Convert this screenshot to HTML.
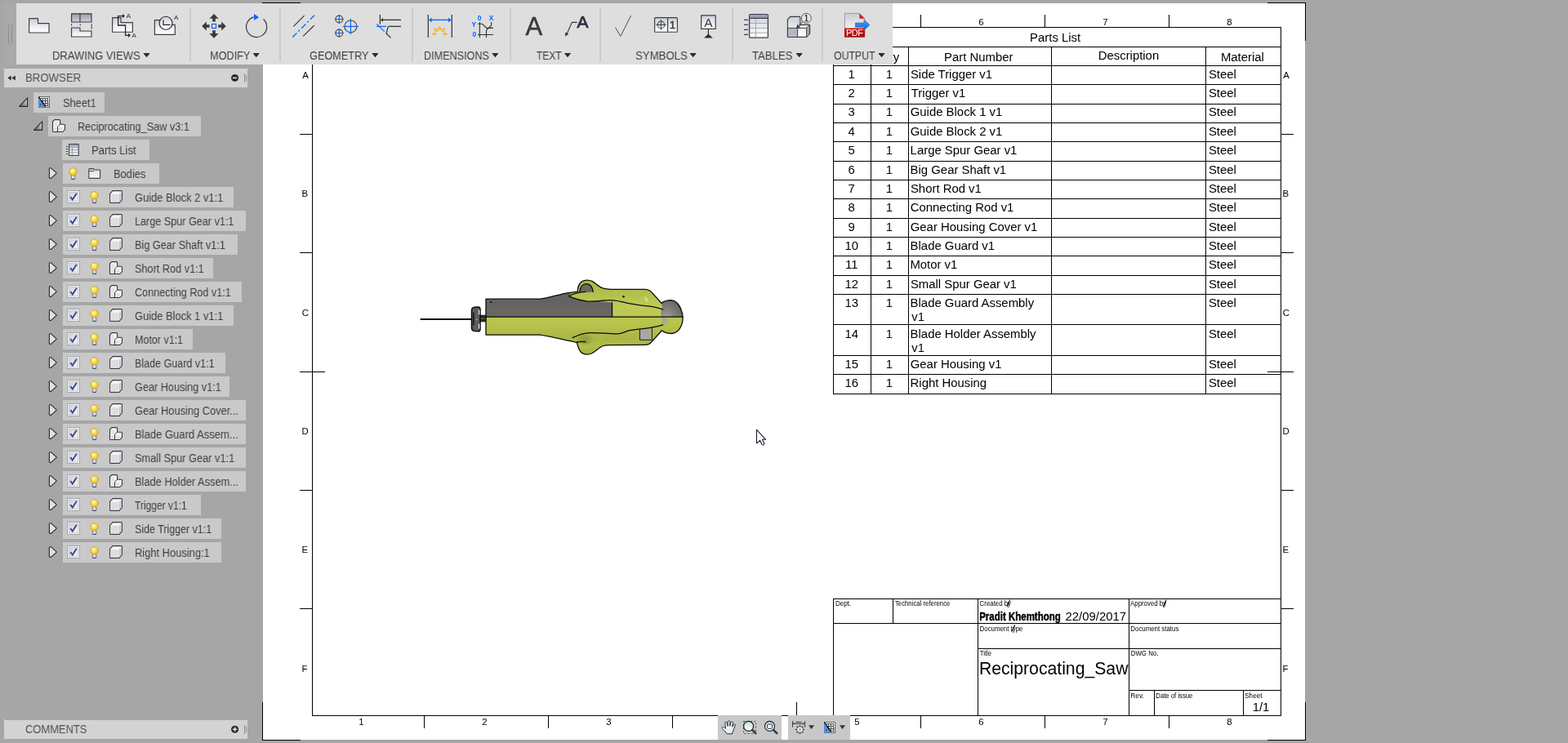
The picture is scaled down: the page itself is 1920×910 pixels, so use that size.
<!DOCTYPE html>
<html lang="en"><head><meta charset="utf-8"><title>Reciprocating_Saw Drawing</title>
<style>
html,body{margin:0;padding:0}
body{width:1920px;height:910px;overflow:hidden;background:#a6a6a6;position:relative;font-family:"Liberation Sans",sans-serif}
#sheet{position:absolute;left:0;top:0}
#toolbar{position:absolute;left:20px;top:4px;width:1073px;height:75px;background:#dedede}
#tbwrap{position:absolute;left:0;top:0;width:1100px;height:80px}
.tl,.pt,.rt{position:absolute;font-size:14px;line-height:17px;white-space:nowrap;transform-origin:0 0;will-change:transform}
.tl{color:#3e3e3e}
.ta{position:absolute;top:65.4px;width:0;height:0;border-left:3.8px solid transparent;border-right:3.8px solid transparent;border-top:5.8px solid #303030}
.ph{position:absolute;background:#d3d3d3}
.pt{color:#505050}
.rb{position:absolute;height:25px;background:#c9c9c9}
.rt{color:#3e3e3e}
.nb{position:absolute;top:876px;height:30px;background:#c8c8c8}
</style></head><body>
<svg id="sheet" width="1920" height="910" viewBox="0 0 1920 910" style="will-change:transform">
<rect x="322" y="4" width="1276" height="902" fill="#fff"/>
<g stroke="#000" stroke-width="1" shape-rendering="crispEdges" fill="none">
<line x1="321" y1="3.5" x2="368" y2="3.5"/>
<line x1="321.5" y1="3" x2="321.5" y2="50"/>
<line x1="1552" y1="3.5" x2="1599" y2="3.5"/>
<line x1="1598.5" y1="3" x2="1598.5" y2="50"/>
<line x1="321" y1="906.5" x2="368" y2="906.5"/>
<line x1="321.5" y1="860" x2="321.5" y2="907"/>
<line x1="1552" y1="906.5" x2="1599" y2="906.5"/>
<line x1="1598.5" y1="860" x2="1598.5" y2="907"/>
<line x1="382" y1="33.5" x2="1569" y2="33.5"/>
<line x1="382" y1="876.5" x2="1569" y2="876.5"/>
<line x1="382.5" y1="33" x2="382.5" y2="877"/>
<line x1="1568.5" y1="33" x2="1568.5" y2="877"/>
<line x1="519.5" y1="18" x2="519.5" y2="34"/>
<line x1="519.5" y1="876" x2="519.5" y2="892"/>
<line x1="671.5" y1="18" x2="671.5" y2="34"/>
<line x1="671.5" y1="876" x2="671.5" y2="892"/>
<line x1="823.5" y1="18" x2="823.5" y2="34"/>
<line x1="823.5" y1="876" x2="823.5" y2="892"/>
<line x1="1127.5" y1="18" x2="1127.5" y2="34"/>
<line x1="1127.5" y1="876" x2="1127.5" y2="892"/>
<line x1="1279.5" y1="18" x2="1279.5" y2="34"/>
<line x1="1279.5" y1="876" x2="1279.5" y2="892"/>
<line x1="1431.5" y1="18" x2="1431.5" y2="34"/>
<line x1="1431.5" y1="876" x2="1431.5" y2="892"/>
<line x1="975.5" y1="18" x2="975.5" y2="50"/>
<line x1="975.5" y1="860" x2="975.5" y2="892"/>
<line x1="367" y1="164.5" x2="383" y2="164.5"/>
<line x1="1568" y1="164.5" x2="1584" y2="164.5"/>
<line x1="367" y1="309.5" x2="383" y2="309.5"/>
<line x1="1568" y1="309.5" x2="1584" y2="309.5"/>
<line x1="367" y1="600.5" x2="383" y2="600.5"/>
<line x1="1568" y1="600.5" x2="1584" y2="600.5"/>
<line x1="367" y1="745.5" x2="383" y2="745.5"/>
<line x1="1568" y1="745.5" x2="1584" y2="745.5"/>
<line x1="367" y1="455.5" x2="398" y2="455.5"/>
<line x1="1552" y1="455.5" x2="1584" y2="455.5"/>
<line x1="1020" y1="57.5" x2="1569" y2="57.5"/>
<line x1="1020" y1="80.5" x2="1569" y2="80.5"/>
<line x1="1020" y1="103.5" x2="1569" y2="103.5"/>
<line x1="1020" y1="127.5" x2="1569" y2="127.5"/>
<line x1="1020" y1="150.5" x2="1569" y2="150.5"/>
<line x1="1020" y1="173.5" x2="1569" y2="173.5"/>
<line x1="1020" y1="197.5" x2="1569" y2="197.5"/>
<line x1="1020" y1="220.5" x2="1569" y2="220.5"/>
<line x1="1020" y1="243.5" x2="1569" y2="243.5"/>
<line x1="1020" y1="267.5" x2="1569" y2="267.5"/>
<line x1="1020" y1="290.5" x2="1569" y2="290.5"/>
<line x1="1020" y1="313.5" x2="1569" y2="313.5"/>
<line x1="1020" y1="337.5" x2="1569" y2="337.5"/>
<line x1="1020" y1="360.5" x2="1569" y2="360.5"/>
<line x1="1020" y1="397.5" x2="1569" y2="397.5"/>
<line x1="1020" y1="435.5" x2="1569" y2="435.5"/>
<line x1="1020" y1="458.5" x2="1569" y2="458.5"/>
<line x1="1020" y1="482.5" x2="1569" y2="482.5"/>
<line x1="1020.5" y1="57" x2="1020.5" y2="483"/>
<line x1="1066.5" y1="57" x2="1066.5" y2="483"/>
<line x1="1112.5" y1="57" x2="1112.5" y2="483"/>
<line x1="1287.5" y1="57" x2="1287.5" y2="483"/>
<line x1="1476.5" y1="57" x2="1476.5" y2="483"/>
<line x1="1020.5" y1="33" x2="1020.5" y2="58"/>
<line x1="1020" y1="733.5" x2="1569" y2="733.5"/>
<line x1="1020.5" y1="733" x2="1020.5" y2="877"/>
<line x1="1093.5" y1="733" x2="1093.5" y2="764"/>
<line x1="1197.5" y1="733" x2="1197.5" y2="877"/>
<line x1="1382.5" y1="733" x2="1382.5" y2="877"/>
<line x1="1020" y1="763.5" x2="1569" y2="763.5"/>
<line x1="1197" y1="794.5" x2="1569" y2="794.5"/>
<line x1="1382" y1="845.5" x2="1569" y2="845.5"/>
<line x1="1413.5" y1="845" x2="1413.5" y2="877"/>
<line x1="1522.5" y1="845" x2="1522.5" y2="877"/>
</g>
<g font-family="'Liberation Sans', sans-serif" font-size="11.4" fill="#000" text-anchor="middle">
<text x="442.3" y="31">1</text><text x="442.3" y="888.2">1</text>
<text x="593.3" y="31">2</text><text x="593.3" y="888.2">2</text>
<text x="745.3" y="31">3</text><text x="745.3" y="888.2">3</text>
<text x="897.3" y="31">4</text><text x="897.3" y="888.2">4</text>
<text x="1049.3" y="31">5</text><text x="1049.3" y="888.2">5</text>
<text x="1201.3" y="31">6</text><text x="1201.3" y="888.2">6</text>
<text x="1353.3" y="31">7</text><text x="1353.3" y="888.2">7</text>
<text x="1505.3" y="31">8</text><text x="1505.3" y="888.2">8</text>
<text x="370.24" y="96" text-anchor="start">A</text><text x="1571.24" y="96" text-anchor="start">A</text>
<text x="369.39" y="241.2" text-anchor="start">B</text><text x="1570.39" y="241.2" text-anchor="start">B</text>
<text x="369.73" y="387" text-anchor="start">C</text><text x="1570.73" y="387" text-anchor="start">C</text>
<text x="369.39" y="532" text-anchor="start">D</text><text x="1570.39" y="532" text-anchor="start">D</text>
<text x="369.39" y="677" text-anchor="start">E</text><text x="1570.39" y="677" text-anchor="start">E</text>
<text x="369.39" y="823" text-anchor="start">F</text><text x="1570.39" y="823" text-anchor="start">F</text>
</g>
<g font-family="'Liberation Sans', sans-serif" font-size="14.9" fill="#000">
<text id="n1" x="1042.7" y="95.7" text-anchor="middle">1</text>
<text id="q1" x="1088.9" y="95.7" text-anchor="middle">1</text>
<text id="p1" x="1114.93" y="95.7">Side Trigger v1</text>
<text id="m1" x="1479.93" y="95.7">Steel</text>
<text id="n2" x="1042.7" y="119.0" text-anchor="middle">2</text>
<text id="q2" x="1088.9" y="119.0" text-anchor="middle">1</text>
<text id="p2" x="1115.83" y="119.0">Trigger v1</text>
<text id="m2" x="1479.93" y="119.0">Steel</text>
<text id="n3" x="1042.7" y="142.4" text-anchor="middle">3</text>
<text id="q3" x="1088.9" y="142.4" text-anchor="middle">1</text>
<text id="p3" x="1114.76" y="142.4">Guide Block 1 v1</text>
<text id="m3" x="1479.93" y="142.4">Steel</text>
<text id="n4" x="1042.7" y="165.8" text-anchor="middle">4</text>
<text id="q4" x="1088.9" y="165.8" text-anchor="middle">1</text>
<text id="p4" x="1114.76" y="165.8">Guide Block 2 v1</text>
<text id="m4" x="1479.93" y="165.8">Steel</text>
<text id="n5" x="1042.7" y="189.1" text-anchor="middle">5</text>
<text id="q5" x="1088.9" y="189.1" text-anchor="middle">1</text>
<text id="p5" x="1114.61" y="189.1">Large Spur Gear v1</text>
<text id="m5" x="1479.93" y="189.1">Steel</text>
<text id="n6" x="1042.7" y="212.5" text-anchor="middle">6</text>
<text id="q6" x="1088.9" y="212.5" text-anchor="middle">1</text>
<text id="p6" x="1114.61" y="212.5">Big Gear Shaft v1</text>
<text id="m6" x="1479.93" y="212.5">Steel</text>
<text id="n7" x="1042.7" y="235.8" text-anchor="middle">7</text>
<text id="q7" x="1088.9" y="235.8" text-anchor="middle">1</text>
<text id="p7" x="1114.93" y="235.8">Short Rod v1</text>
<text id="m7" x="1479.93" y="235.8">Steel</text>
<text id="n8" x="1042.7" y="259.2" text-anchor="middle">8</text>
<text id="q8" x="1088.9" y="259.2" text-anchor="middle">1</text>
<text id="p8" x="1114.76" y="259.2">Connecting Rod v1</text>
<text id="m8" x="1479.93" y="259.2">Steel</text>
<text id="n9" x="1042.7" y="282.5" text-anchor="middle">9</text>
<text id="q9" x="1088.9" y="282.5" text-anchor="middle">1</text>
<text id="p9" x="1114.76" y="282.5">Gear Housing Cover v1</text>
<text id="m9" x="1479.93" y="282.5">Steel</text>
<text id="n10" x="1042.7" y="305.9" text-anchor="middle">10</text>
<text id="q10" x="1088.9" y="305.9" text-anchor="middle">1</text>
<text id="p10" x="1114.61" y="305.9">Blade Guard v1</text>
<text id="m10" x="1479.93" y="305.9">Steel</text>
<text id="n11" x="1042.7" y="329.2" text-anchor="middle">11</text>
<text id="q11" x="1088.9" y="329.2" text-anchor="middle">1</text>
<text id="p11" x="1114.41" y="329.2">Motor v1</text>
<text id="m11" x="1479.93" y="329.2">Steel</text>
<text id="n12" x="1042.7" y="352.6" text-anchor="middle">12</text>
<text id="q12" x="1088.9" y="352.6" text-anchor="middle">1</text>
<text id="p12" x="1114.93" y="352.6">Small Spur Gear v1</text>
<text id="m12" x="1479.93" y="352.6">Steel</text>
<text id="n13" x="1042.7" y="375.9" text-anchor="middle">13</text>
<text id="q13" x="1088.9" y="375.9" text-anchor="middle">1</text>
<text id="p13" x="1114.61" y="375.9">Blade Guard Assembly</text>
<text id="v13" x="1116.33" y="393.2">v1</text>
<text id="m13" x="1479.93" y="375.9">Steel</text>
<text id="n14" x="1042.7" y="413.6" text-anchor="middle">14</text>
<text id="q14" x="1088.9" y="413.6" text-anchor="middle">1</text>
<text id="p14" x="1114.61" y="413.6">Blade Holder Assembly</text>
<text id="v14" x="1116.33" y="430.5">v1</text>
<text id="m14" x="1479.93" y="413.6">Steel</text>
<text id="n15" x="1042.7" y="450.6" text-anchor="middle">15</text>
<text id="q15" x="1088.9" y="450.6" text-anchor="middle">1</text>
<text id="p15" x="1114.76" y="450.6">Gear Housing v1</text>
<text id="m15" x="1479.93" y="450.6">Steel</text>
<text id="n16" x="1042.7" y="474.4" text-anchor="middle">16</text>
<text id="q16" x="1088.9" y="474.4" text-anchor="middle">1</text>
<text id="p16" x="1114.61" y="474.4">Right Housing</text>
<text id="m16" x="1479.93" y="474.4">Steel</text>
<text id="hPL" x="1261.11" y="51.2">Parts List</text>
<text id="hItem" x="1029.26" y="74.7">Item</text>
<text id="hQty" x="1077.93" y="74.7">Qty</text>
<text id="hPN" x="1156.11" y="74.7">Part Number</text>
<text id="hDesc" x="1344.71" y="73.0">Description</text>
<text id="hMat" x="1494.91" y="74.7">Material</text>
<text id="date" x="1304.56" y="759.8">22/09/2017</text>
<text id="sh" x="1533.68" y="871.4">1/1</text>
<text id="title" x="1198.90" y="825.6" font-size="21.2">Reciprocating_Saw</text>
<text id="name" x="1199.14" y="760.4" font-size="15.2" font-weight="bold" stroke="#000" stroke-width="0.45" textLength="99.67" lengthAdjust="spacingAndGlyphs">Pradit Khemthong</text>
<text id="l1" x="1022.97" y="742.2" font-size="8.2" textLength="19.10" lengthAdjust="spacingAndGlyphs">Dept.</text>
<text id="l2" x="1095.95" y="742.2" font-size="8.2" textLength="67.42" lengthAdjust="spacingAndGlyphs">Technical reference</text>
<text id="l3" x="1199.60" y="742.2" font-size="8.2" textLength="38.45" lengthAdjust="spacingAndGlyphs">Created by</text>
<text id="l4" x="1384.03" y="742.2" font-size="8.2" textLength="44.14" lengthAdjust="spacingAndGlyphs">Approved by</text>
<text id="l5" x="1199.60" y="773.3" font-size="8.2" textLength="52.89" lengthAdjust="spacingAndGlyphs">Document type</text>
<text id="l6" x="1384.34" y="773.3" font-size="8.2" textLength="59.01" lengthAdjust="spacingAndGlyphs">Document status</text>
<text id="l7" x="1199.78" y="802.8" font-size="8.2" textLength="14.41" lengthAdjust="spacingAndGlyphs">Title</text>
<text id="l8" x="1384.78" y="802.8" font-size="8.2" textLength="33.60" lengthAdjust="spacingAndGlyphs">DWG No.</text>
<text id="l9" x="1384.21" y="854.7" font-size="8.2" textLength="16.60" lengthAdjust="spacingAndGlyphs">Rev.</text>
<text id="l10" x="1415.37" y="854.7" font-size="8.2" textLength="45.05" lengthAdjust="spacingAndGlyphs">Date of issue</text>
<text id="l11" x="1524.23" y="854.7" font-size="8.2" textLength="21.19" lengthAdjust="spacingAndGlyphs">Sheet</text>
</g>
<path d="M1233 743.2L1236.8 734.8 M1424.2 743.2L1428 734.8 M1238.8 773.8L1242.8 765.2" stroke="#000" stroke-width="1.1" fill="none"/>
</svg>
<svg id="saw" width="340" height="110" viewBox="505 335 340 110" style="position:absolute;left:505px;top:335px">
<defs>
<linearGradient id="sY" gradientUnits="userSpaceOnUse" x1="0" y1="343" x2="0" y2="434"><stop offset="0" stop-color="#aab646"/><stop offset="0.2" stop-color="#b4c04c"/><stop offset="0.36" stop-color="#c0cb58"/><stop offset="0.5" stop-color="#bac650"/><stop offset="0.62" stop-color="#b6c24c"/><stop offset="0.78" stop-color="#aab644"/><stop offset="0.9" stop-color="#b2be4a"/><stop offset="1" stop-color="#a4b040"/></linearGradient>
<linearGradient id="sG" x1="0" y1="0" x2="0" y2="1"><stop offset="0" stop-color="#62605d"/><stop offset="1" stop-color="#6a6865"/></linearGradient>
<radialGradient id="sK" gradientUnits="userSpaceOnUse" cx="816" cy="388" r="20"><stop offset="0" stop-color="#a09e9a"/><stop offset="0.45" stop-color="#84827e"/><stop offset="1" stop-color="#6c6a67"/></radialGradient>
<radialGradient id="sK2" gradientUnits="userSpaceOnUse" cx="812" cy="392" r="9"><stop offset="0" stop-color="#a4a29c"/><stop offset="1" stop-color="#a4a29c" stop-opacity="0"/></radialGradient>
<radialGradient id="sSh" gradientUnits="userSpaceOnUse" cx="716" cy="416" r="12"><stop offset="0" stop-color="#8e9a3a"/><stop offset="1" stop-color="#8e9a3a" stop-opacity="0"/></radialGradient>
<radialGradient id="sHi"><stop offset="0" stop-color="#dfe6a4" stop-opacity="0.9"/><stop offset="1" stop-color="#dfe6a4" stop-opacity="0"/></radialGradient>
</defs>
<!-- blade -->
<path d="M515.4 391H578" stroke="#0c0c0c" stroke-width="1.9" stroke-linecap="round" fill="none"/>
<!-- shaft -->
<rect x="587.4" y="386.2" width="8.2" height="7.6" fill="#2e2c28" stroke="#0c0c0c" stroke-width="0.9"/>
<path d="M588 390H595" stroke="#5a5852" stroke-width="1.2"/>
<!-- guard -->
<path d="M577.5 380.4Q577.5 376.6 581.2 376.3L585.4 376.1Q588 376.3 588 378.8V403.2Q588 405.8 585.4 405.8L581.4 405.5Q577.5 405 577.5 401.4Z" fill="#5c5c5a" stroke="#0c0c0c" stroke-width="1.5"/>
<path d="M586.6 379.4v5.8 M586.6 396.6v6" stroke="#ecece6" stroke-width="1.3" fill="none"/>
<path d="M579.9 382.6V398.6" stroke="#1c1c1c" stroke-width="1.8" fill="none"/>
<rect x="583" y="390.8" width="1.2" height="1.2" fill="#d8d8d0"/>
<!-- body fill -->
<path d="M595 366.2H661C672 365 684 360.6 696 358.6L707.2 357.2C707.4 352 709.4 346.4 713.4 344.4C717 342.8 722 342.9 725.4 344.6C729.6 346.8 733 351.4 739 353.2C742 354.2 745 354.3 748 354.3H789.6C793.2 354.3 795.6 355.4 797.6 357.6L810 371.2C813 368.8 817.4 367.7 821.6 367.7C827.6 368 831.4 373.4 833.6 378.6C836.6 385.4 836.6 393 834.4 398.6C832.2 404 828.4 408.4 822.6 408.5C817.6 408.6 813.4 407.2 810.4 404.8L797.4 419.4C795.4 421.4 793.2 422.4 790 422.4L748 422.7C744 422.7 740.4 423 737.4 424C732.4 426.4 728.6 431 724.2 433C720.4 434.4 716 434.3 712.6 432.4C709 430 707.4 424 706.4 419.4C692 416.6 676 412.4 661 410.2H595Z" fill="url(#sY)"/>
<ellipse cx="716" cy="416" rx="12" ry="6" fill="url(#sSh)"/>
<!-- gray top -->
<path d="M595 366.2H661C672 365 684 360.6 696 358.6L699.6 358.2L696.6 362.4C702 365 710 367.6 718 368.9C728 369.6 740 369.2 749.5 370.4V388.2H595Z" fill="url(#sG)"/>
<!-- arch -->
<path d="M709.8 357.4C710.4 351.4 713.6 347.6 718 347.6C722.6 347.6 726 352 726.2 357.6C721 358.4 715 358 709.8 357.4Z" fill="#6a6865"/>
<!-- knob gray -->
<path d="M809.6 378.2V388.2H836C836.2 383 834.6 377.8 832 373.6C829.4 369.8 825.6 367.7 821.6 367.7C817.4 367.7 813 368.8 810 371.2L811.4 377.8Z" fill="url(#sK)"/>
<path d="M809.6 388.2H822C821 394 817 399 811.8 398Z" fill="url(#sK2)"/>
<ellipse cx="791.4" cy="366.6" rx="2.6" ry="5" fill="url(#sHi)" transform="rotate(-18 791.4 366.6)"/>
<!-- small rect -->
<path d="M783.4 403.6L798.4 402V416.3H783.4Z" fill="#a9a7a0"/>
<!-- outlines -->
<g fill="none" stroke="#0c0c0c" stroke-width="1.3" stroke-linejoin="round" stroke-linecap="round">
<path d="M595 366.2H661C672 365 684 360.6 696 358.6L707.2 357.2C707.4 352 709.4 346.4 713.4 344.4C717 342.8 722 342.9 725.4 344.6C729.6 346.8 733 351.4 739 353.2C742 354.2 745 354.3 748 354.3H789.6C793.2 354.3 795.6 355.4 797.6 357.6L810 371.2C813 368.8 817.4 367.7 821.6 367.7C827.6 368 831.4 373.4 833.6 378.6C836.6 385.4 836.6 393 834.4 398.6C832.2 404 828.4 408.4 822.6 408.5C817.6 408.6 813.4 407.2 810.4 404.8L797.4 419.4C795.4 421.4 793.2 422.4 790 422.4L748 422.7C744 422.7 740.4 423 737.4 424C732.4 426.4 728.6 431 724.2 433C720.4 434.4 716 434.3 712.6 432.4C709 430 707.4 424 706.4 419.4C692 416.6 676 412.4 661 410.2H595Z"/>
<path d="M595 388.2H836"/>
<path d="M749.5 370.4V388.2"/>
<path d="M717 357.3C710 357.4 702 359.6 696.4 362.6C702 365.2 710 367.6 718 368.9C728 369.8 738 368 746 367.6C754 367.4 762 369.6 769 371.4C779 373.6 790 374.4 799 375.6C804 376.4 808 377.8 811.6 378.6"/>
<path d="M709.8 357.4C710.4 351.4 713.6 347.6 718 347.6C722.6 347.6 726 352 726.2 357.6"/>
<path d="M701.2 413.6C707 410.6 715 408 723 407.6C734 407.2 746 409.2 757 408.8C762 408.4 766 406 770 404.8C780 403 790 402.6 799 400.9C804 400 808 399 811.8 397.9"/>
<path d="M706.6 418.8C710 418.2 713.6 418.2 717 418.6"/>
<path d="M783.4 403.4V416.3H798.4V401.4" stroke-width="0.9"/>
</g>
<circle cx="763.5" cy="363.2" r="1.25" fill="#0c0c0c"/>
<rect x="600" y="369.4" width="2.2" height="1.6" fill="#0c0c0c"/>
</svg>

<div style="position:absolute;left:4px;top:4px;width:16px;height:75px;background:#a9a9a9"></div>
<div id="toolbar"></div>
<div id="tbwrap">
<svg id="tbicons" width="1100" height="80" viewBox="0 0 1100 80" style="position:absolute;left:0;top:0;will-change:transform">
<defs>
<linearGradient id="gA" x1="0" y1="0" x2="0" y2="1"><stop offset="0" stop-color="#c9cdd6"/><stop offset="0.6" stop-color="#eef0f3"/><stop offset="1" stop-color="#ffffff"/></linearGradient>
<linearGradient id="gB" x1="0" y1="0" x2="0" y2="1"><stop offset="0" stop-color="#969dac"/><stop offset="1" stop-color="#cdd1d8"/></linearGradient>
<linearGradient id="gR" x1="0" y1="0" x2="0" y2="1"><stop offset="0" stop-color="#d0181c"/><stop offset="1" stop-color="#a50c10"/></linearGradient>
<linearGradient id="gBl" x1="0" y1="0" x2="0" y2="1"><stop offset="0" stop-color="#4aa0f0"/><stop offset="1" stop-color="#1468d8"/></linearGradient>
<radialGradient id="gO"><stop offset="0" stop-color="#ffe020"/><stop offset="0.6" stop-color="#ffa010"/><stop offset="1" stop-color="#ff7a00" stop-opacity="0"/></radialGradient>
<filter id="sh" x="-20%" y="-20%" width="140%" height="150%"><feDropShadow dx="0" dy="1" stdDeviation="0.7" flood-color="#000" flood-opacity="0.35"/></filter>
</defs>
<rect x="10" y="30" width="1" height="23" fill="#8e8e8e"/><rect x="14" y="30" width="1" height="23" fill="#8e8e8e"/>
<rect x="232" y="9" width="2" height="66" fill="#cbcbcb"/>
<rect x="342" y="9" width="2" height="66" fill="#cbcbcb"/>
<rect x="504" y="9" width="2" height="66" fill="#cbcbcb"/>
<rect x="624" y="9" width="2" height="66" fill="#cbcbcb"/>
<rect x="734" y="9" width="2" height="66" fill="#cbcbcb"/>
<rect x="896" y="9" width="2" height="66" fill="#cbcbcb"/>
<rect x="1006" y="9" width="2" height="66" fill="#cbcbcb"/>
<g filter="url(#sh)"><path d="M35.6 22.6H46.5V28.6H60V40H35.6Z" fill="url(#gA)" stroke="#3c3c3c" stroke-width="1.15" stroke-linejoin="round"/></g>
<g filter="url(#sh)"><path d="M87.6 16.8H98V27H87.6Z M98 16.8H112V27H98Z" fill="url(#gB)" stroke="#3c3c3c" stroke-width="1.15" stroke-linejoin="round"/><path d="M87.6 34H98V38H112V45H87.6Z" fill="url(#gA)" stroke="#3c3c3c" stroke-width="1.15" stroke-linejoin="round"/></g>
<path d="M87.6 29.2v2.4 M98.2 29.2v2.4 M112.2 29.2v6.4" stroke="#3a3a3a" stroke-width="1" fill="none"/>
<g filter="url(#sh)"><path d="M137.6 21.6H148V27.6H162.4V39.2H137.6Z" fill="url(#gA)" stroke="#3c3c3c" stroke-width="1.15" stroke-linejoin="round"/></g>
<path d="M151 19.6H144.6V31H153.6V43.3H158" stroke="#2a2a2a" stroke-width="1.3" fill="none"/>
<path d="M150 17L153 19.6L150 22.2Z M157 40.7L160 43.3L157 45.9Z" fill="#2a2a2a"/>
<text x="154.8" y="21.6" font-family="'Liberation Sans',sans-serif" font-size="8" fill="#2a2a2a">A</text>
<text x="161.6" y="45.8" font-family="'Liberation Sans',sans-serif" font-size="8" fill="#2a2a2a">A</text>
<g filter="url(#sh)"><path d="M189.4 24.6H197L210.8 30.4H214.3V42.4H189.4Z" fill="url(#gA)" stroke="#3c3c3c" stroke-width="1.15" stroke-linejoin="round"/></g>
<circle cx="203.1" cy="28.2" r="8" fill="url(#gA)" stroke="#2a2a2a" stroke-width="1.1"/>
<path d="M200 24.6V30.4H208.6" stroke="#2a2a2a" stroke-width="1.2" fill="none"/>
<text x="213" y="24.4" font-family="'Liberation Sans',sans-serif" font-size="8" fill="#2a2a2a">A</text>
<g fill="#3a3a3a" filter="url(#sh)"><path d="M262 17L267.6 22.8H263.8V26.6H260.2V22.8H256.4Z"/><path d="M262 46.8L267.6 41H263.8V37.2H260.2V41H256.4Z"/><path d="M247.2 32L252.8 26.4V30.2H256.6V33.8H252.8V37.6Z"/><path d="M276.8 32L271.2 26.4V30.2H267.2V33.8H271.2V37.6Z"/></g>
<rect x="259.5" y="29.5" width="5" height="5" fill="#e4e0d8" stroke="#0a64ff" stroke-width="1.2"/>
<path d="M322.5 23.5A12.6 12.6 0 1 1 310.6 20.8" fill="none" stroke="#3a3a3a" stroke-width="1.2" filter="url(#sh)"/>
<path d="M311 17L317.2 21.2L311 24.8Z" fill="#0a64ff"/>
<g fill="none" stroke-linecap="butt" filter="url(#sh)"><path d="M359.4 32.4L372.6 19.2 M371.2 44.4L384.6 31.2" stroke="#3a3a3a" stroke-width="1.2"/><path d="M358.2 45.6L385 18.8" stroke="#0a64ff" stroke-width="1.35" stroke-dasharray="7.4 2.6 2.4 3"/></g>
<g fill="none" filter="url(#sh)"><circle cx="415.3" cy="23.5" r="4.4" stroke="#4a4a4a" stroke-width="1.2"/><circle cx="415.3" cy="40.5" r="4.4" stroke="#4a4a4a" stroke-width="1.2"/><circle cx="429.4" cy="32.4" r="7.4" stroke="#4a4a4a" stroke-width="1.2"/><path d="M410 23.5H421 M415.3 18V29 M410 40.5H421 M415.3 35V46 M420 32.4H439 M429.4 23V42" stroke="#0a64ff" stroke-width="1.2"/></g>
<g fill="none" filter="url(#sh)"><path d="M465.4 18V29.8 M467 24.4H491 M475.4 32.4H491 M475.2 32.6L473 41L478.6 46.4" stroke="#2f2f2f" stroke-width="1.2"/><path d="M466 24.4L469 22V26.8Z" fill="#2f2f2f" stroke="none"/><path d="M461 32.4H473 M461.4 29.4L470.8 38.6" stroke="#0a64ff" stroke-width="1.2"/></g>
<g fill="none" filter="url(#sh)"><path d="M524.3 18V46 M553.3 18V46" stroke="#2f2f2f" stroke-width="1.2"/><path d="M527 24.4H551" stroke="#0a64ff" stroke-width="1.4"/><path d="M525 24.4L528.6 21.6V27.2Z M552.6 24.4L549 21.6V27.2Z" fill="#0a64ff"/></g>
<path d="M534.2 37.3l-2.4 -2.4" stroke="#ff8a00" stroke-width="1.1" fill="none"/><circle cx="534.2" cy="37.3" r="2.3" fill="url(#gO)"/><circle cx="534.2" cy="37.3" r="1" fill="#ffe626"/>
<path d="M538.2 35.5l0.0 -3.1" stroke="#ff8a00" stroke-width="1.1" fill="none"/><circle cx="538.2" cy="35.5" r="2.3" fill="url(#gO)"/><circle cx="538.2" cy="35.5" r="1" fill="#ffe626"/>
<path d="M542.5 37.1l2.4 -2.4" stroke="#ff8a00" stroke-width="1.1" fill="none"/><circle cx="542.5" cy="37.1" r="2.3" fill="url(#gO)"/><circle cx="542.5" cy="37.1" r="1" fill="#ffe626"/>
<path d="M532.4 41.5l-3.1 0.0" stroke="#ff8a00" stroke-width="1.1" fill="none"/><circle cx="532.4" cy="41.5" r="2.3" fill="url(#gO)"/><circle cx="532.4" cy="41.5" r="1" fill="#ffe626"/>
<path d="M544.4 41.5l3.1 0.0" stroke="#ff8a00" stroke-width="1.1" fill="none"/><circle cx="544.4" cy="41.5" r="2.3" fill="url(#gO)"/><circle cx="544.4" cy="41.5" r="1" fill="#ffe626"/>
<g font-family="'Liberation Sans',sans-serif" font-size="8.5" font-weight="bold" fill="#0a64ff" text-anchor="middle"><text x="587" y="25">0</text><text x="601.6" y="25">X</text><text x="580.4" y="32.8">Y</text><text x="580.8" y="44.8">0</text></g>
<path d="M587.4 27V46 M585 29.3H590.4L596 34.4H604 M601.6 27V31L595.5 37.2V46 M585 42.5H604" fill="none" stroke="#2f2f2f" stroke-width="1.1"/>
<text x="653.8" y="42.8" font-family="'Liberation Sans',sans-serif" font-size="31" stroke="#3a3a3a" stroke-width="0.5" fill="#3a3a3a" text-anchor="middle" filter="url(#sh)">A</text>
<text x="713.6" y="33.8" font-family="'Liberation Sans',sans-serif" font-size="21" stroke="#2b3040" stroke-width="0.7" fill="#2b3040" text-anchor="middle" filter="url(#sh)">A</text>
<path d="M706.6 27.4H700.4L693.6 42.6" fill="none" stroke="#2b3040" stroke-width="1.1"/><path d="M692 44.8L692.4 39.6L696.2 41.6Z" fill="#2b3040"/>
<path d="M753.6 33.8L759.8 44.4L772.6 19.2" fill="none" stroke="#4a4a4a" stroke-width="1" filter="url(#sh)"/>
<g filter="url(#sh)"><rect x="801.6" y="21.6" width="27.8" height="17.6" rx="1" fill="url(#gA)" stroke="#3c3c3c" stroke-width="1.15" stroke-linejoin="round"/></g><path d="M817.6 21.6V39.2" stroke="#3c3c3c" stroke-width="1.15" stroke-linejoin="round"/>
<circle cx="809.4" cy="30.4" r="4.3" fill="none" stroke="#4a4a4a" stroke-width="1.1"/><path d="M803.4 30.4H815.6 M809.4 24.2V36.6" stroke="#4a4a4a" stroke-width="1.1"/>
<text x="823.6" y="34.8" font-family="'Liberation Sans',sans-serif" font-size="13.5" stroke="#3a3a3a" stroke-width="0.5" fill="#3a3a3a" text-anchor="middle">1</text>
<g filter="url(#sh)"><rect x="858.6" y="18.8" width="17.6" height="16.6" fill="url(#gA)" stroke="#3c3c3c" stroke-width="1.15" stroke-linejoin="round"/></g>
<text x="867.4" y="32.6" font-family="'Liberation Sans',sans-serif" font-size="15.5" fill="#3a3a3a" text-anchor="middle">A</text>
<path d="M867.4 35.6V42" stroke="#2f2f2f" stroke-width="1.2"/><path d="M862 46.6L867.4 41.4L872.8 46.6Z" fill="#2f2f2f"/>
<g filter="url(#sh)"><rect x="917.6" y="17.6" width="22.8" height="28.6" rx="1.2" fill="url(#gA)" stroke="#3a3f50" stroke-width="1.3"/></g>
<rect x="918.2" y="18.2" width="21.6" height="3.8" fill="#9aa0b2"/><path d="M917.6 22.4H940.4" stroke="#3a3f50" stroke-width="1.2"/>
<path d="M918 28.4H940 M918 34.3H940 M918 40.2H940 M925.4 23V46" stroke="#a6a6ae" stroke-width="1"/>
<path d="M911 24.4H916 M911 30.4H916 M911 36.4H916 M911 42.4H916" stroke="#3a3f50" stroke-width="1.2"/>
<g filter="url(#sh)"><path d="M964.4 23.8L967.6 20.4H978.8Q979.8 20.4 979.8 21.6V30.4H990.6Q991.6 30.4 991.6 31.4V41.2L987.6 45.3H964.4Z" fill="url(#gA)" stroke="#3c3c3c" stroke-width="1.15" stroke-linejoin="round"/></g>
<rect x="965" y="35" width="11" height="9.7" fill="#b2b8c6"/><path d="M988.2 34.6L991 31.8V41L988.2 44.2Z" fill="#9aa4b2"/><path d="M976.6 24.6L979.2 22V30L976.6 33.6Z" fill="#c6cad4"/>
<path d="M964.4 34.4H976.6V45.3 M976.6 34.4H987.6V45 M987.6 34.4L991.4 30.6 M976.6 34.4L980 30.6" fill="none" stroke="#3c3c3c" stroke-width="1"/>
<circle cx="987.3" cy="22.3" r="6" fill="#e6e6e6" stroke="#5a5a5a" stroke-width="1"/>
<text x="987.3" y="26.3" font-family="'Liberation Serif',serif" font-size="11.5" fill="#2a2a2a" stroke="#2a2a2a" stroke-width="0.3" text-anchor="middle">1</text>
<path d="M982.8 26.6L978 31.6" stroke="#3a3a3a" stroke-width="1"/><path d="M975.2 34.2L976.2 29.8L979.8 33.4Z" fill="#3a3a3a"/>
<g filter="url(#sh)"><path d="M1034.4 16.4H1052.4L1058.8 22.8V45.4H1034.4Z" fill="url(#gA)" stroke="#8a8a8a" stroke-width="0.8"/></g>
<path d="M1052.4 16.4L1058.8 22.8H1052.4Z" fill="#d0202a"/>
<rect x="1034" y="34.4" width="25" height="11.2" fill="url(#gR)"/>
<text x="1046.5" y="44" font-family="'Liberation Sans',sans-serif" font-size="11" fill="#fff" text-anchor="middle" textLength="21">PDF</text>
<path d="M1047.4 28H1058V24.2L1065 30.6L1058 37V33.2H1047.4Z" fill="url(#gBl)" stroke="#1a5fc0" stroke-width="0.6"/>
<g fill="#2c2c2c"><path d="M175.8 65H183.20000000000002V65.7L179.5 70.3L175.8 65.7Z"/><path d="M310 65H317.4V65.7L313.7 70.3L310 65.7Z"/><path d="M455.7 65H463.09999999999997V65.7L459.4 70.3L455.7 65.7Z"/><path d="M602.7 65H610.1V65.7L606.4000000000001 70.3L602.7 65.7Z"/><path d="M691.3 65H698.6999999999999V65.7L695.0 70.3L691.3 65.7Z"/><path d="M845 65H852.4V65.7L848.7 70.3L845 65.7Z"/><path d="M975 65H982.4V65.7L978.7 70.3L975 65.7Z"/><path d="M1075.8 65H1083.2V65.7L1079.5 70.3L1075.8 65.7Z"/></g>
</svg>
<div class="tl" id="tl0" style="left:64.00px;top:60px;transform:scaleX(0.9276)">DRAWING VIEWS</div>
<div class="tl" id="tl1" style="left:257.00px;top:60px;transform:scaleX(0.9070)">MODIFY</div>
<div class="tl" id="tl2" style="left:379.00px;top:60px;transform:scaleX(0.9074)">GEOMETRY</div>
<div class="tl" id="tl3" style="left:519.00px;top:60px;transform:scaleX(0.9017)">DIMENSIONS</div>
<div class="tl" id="tl4" style="left:657.00px;top:60px;transform:scaleX(0.8546)">TEXT</div>
<div class="tl" id="tl5" style="left:778.00px;top:60px;transform:scaleX(0.9437)">SYMBOLS</div>
<div class="tl" id="tl6" style="left:921.00px;top:60px;transform:scaleX(0.9393)">TABLES</div>
<div class="tl" id="tl7" style="left:1021.00px;top:60px;transform:scaleX(0.8781)">OUTPUT</div>
</div>
<div id="browser">
<div class="ph" style="left:5px;top:84px;width:298px;height:23px"></div><div class="pt" id="hb" style="left:31.00px;top:87px;transform:scaleX(0.9419)">BROWSER</div>
<div class="ph" style="left:5px;top:882px;width:298px;height:23px"></div><div class="pt" id="hc" style="left:31.00px;top:885px;transform:scaleX(0.9233)">COMMENTS</div>
<div class="rb" style="left:41px;top:113px;width:87px"></div><div class="rt" id="r0" style="left:77.00px;top:118px;transform:scaleX(0.9172)">Sheet1</div>
<div class="rb" style="left:59px;top:142px;width:187px"></div><div class="rt" id="r1" style="left:95.00px;top:147px;transform:scaleX(0.9069)">Reciprocating_Saw v3:1</div>
<div class="rb" style="left:76px;top:171px;width:107px"></div><div class="rt" id="r2" style="left:112.00px;top:176px;transform:scaleX(0.9348)">Parts List</div>
<div class="rb" style="left:77px;top:200px;width:118px"></div><div class="rt" id="r3" style="left:139.00px;top:205px;transform:scaleX(0.9208)">Bodies</div>
<div class="rb" style="left:77px;top:229px;width:209px"></div><div class="rt" id="r4" style="left:165.00px;top:234px;transform:scaleX(0.9218)">Guide Block 2 v1:1</div>
<div class="rb" style="left:77px;top:258px;width:224px"></div><div class="rt" id="r5" style="left:165.00px;top:263px;transform:scaleX(0.9018)">Large Spur Gear v1:1</div>
<div class="rb" style="left:77px;top:287px;width:214px"></div><div class="rt" id="r6" style="left:165.00px;top:292px;transform:scaleX(0.9066)">Big Gear Shaft v1:1</div>
<div class="rb" style="left:77px;top:316px;width:184px"></div><div class="rt" id="r7" style="left:165.00px;top:321px;transform:scaleX(0.9071)">Short Rod v1:1</div>
<div class="rb" style="left:77px;top:345px;width:219px"></div><div class="rt" id="r8" style="left:165.00px;top:350px;transform:scaleX(0.9008)">Connecting Rod v1:1</div>
<div class="rb" style="left:77px;top:374px;width:209px"></div><div class="rt" id="r9" style="left:165.00px;top:379px;transform:scaleX(0.9218)">Guide Block 1 v1:1</div>
<div class="rb" style="left:77px;top:403px;width:159px"></div><div class="rt" id="r10" style="left:165.00px;top:408px;transform:scaleX(0.8934)">Motor v1:1</div>
<div class="rb" style="left:77px;top:432px;width:199px"></div><div class="rt" id="r11" style="left:165.00px;top:437px;transform:scaleX(0.8951)">Blade Guard v1:1</div>
<div class="rb" style="left:77px;top:461px;width:204px"></div><div class="rt" id="r12" style="left:165.00px;top:466px;transform:scaleX(0.9064)">Gear Housing v1:1</div>
<div class="rb" style="left:77px;top:490px;width:224px"></div><div class="rt" id="r13" style="left:165.00px;top:495px;transform:scaleX(0.9164)">Gear Housing Cover...</div>
<div class="rb" style="left:77px;top:519px;width:224px"></div><div class="rt" id="r14" style="left:165.00px;top:524px;transform:scaleX(0.9308)">Blade Guard Assem...</div>
<div class="rb" style="left:77px;top:548px;width:224px"></div><div class="rt" id="r15" style="left:165.00px;top:553px;transform:scaleX(0.9135)">Small Spur Gear v1:1</div>
<div class="rb" style="left:77px;top:577px;width:224px"></div><div class="rt" id="r16" style="left:165.00px;top:582px;transform:scaleX(0.9163)">Blade Holder Assem...</div>
<div class="rb" style="left:77px;top:606px;width:169px"></div><div class="rt" id="r17" style="left:165.00px;top:611px;transform:scaleX(0.8578)">Trigger v1:1</div>
<div class="rb" style="left:77px;top:635px;width:194px"></div><div class="rt" id="r18" style="left:165.00px;top:640px;transform:scaleX(0.8904)">Side Trigger v1:1</div>
<div class="rb" style="left:77px;top:664px;width:194px"></div><div class="rt" id="r19" style="left:165.00px;top:669px;transform:scaleX(0.9212)">Right Housing:1</div>
<svg width="322" height="910" viewBox="0 0 322 910" style="position:absolute;left:0;top:0">
<defs>
<radialGradient id="gBulb" cx="0.4" cy="0.35" r="0.7"><stop offset="0" stop-color="#fffbd0"/><stop offset="0.45" stop-color="#fbe24a"/><stop offset="1" stop-color="#e6b820"/></radialGradient>
<linearGradient id="gChk" x1="0" y1="0" x2="1" y2="1"><stop offset="0" stop-color="#cfd3d8"/><stop offset="1" stop-color="#f4f5f6"/></linearGradient>
<linearGradient id="gTri" x1="0" y1="1" x2="1" y2="0"><stop offset="0" stop-color="#5a5a5a"/><stop offset="1" stop-color="#e8e8e8"/></linearGradient>
<linearGradient id="gF" x1="0" y1="0" x2="0" y2="1"><stop offset="0" stop-color="#d4d8de"/><stop offset="1" stop-color="#fafafa"/></linearGradient>
</defs>
<rect x="4" y="83" width="1" height="1" fill="#e6e6e6"/><rect x="303" y="83" width="1" height="1" fill="#e6e6e6"/><rect x="4" y="881" width="1" height="1" fill="#e6e6e6"/><rect x="303" y="881" width="1" height="1" fill="#e6e6e6"/>
<path d="M9.4 95.6L13.6 92.6V98.6Z M14.4 95.6L18.8 92.6V98.6Z" fill="#2a2a2a"/>
<circle cx="287.6" cy="95.4" r="4.5" fill="#2a2a2a"/><rect x="285" y="94.7" width="5.2" height="1.5" fill="#e8e8e8"/>
<rect x="299" y="90" width="1" height="11" fill="#8a8a8a"/><rect x="301" y="92" width="1" height="7" fill="#8a8a8a"/>
<circle cx="287.6" cy="893.2" r="4.5" fill="#2a2a2a"/><rect x="285" y="892.5" width="5.2" height="1.5" fill="#e8e8e8"/><rect x="286.85" y="890.6" width="1.5" height="5.2" fill="#e8e8e8"/>
<rect x="299" y="888" width="1" height="11" fill="#8a8a8a"/><rect x="301" y="890" width="1" height="7" fill="#8a8a8a"/>
<path d="M33.6 119.8V130.4H23.6Z" fill="url(#gTri)" stroke="#2a2a2a" stroke-width="1.1" stroke-linejoin="round"/>
<rect x="47.5" y="118.5" width="13" height="13" fill="#fdfdfd" stroke="#686868" stroke-width="1"/><rect x="58" y="125" width="2" height="6" fill="#c4cee6"/><g shape-rendering="crispEdges"><rect x="50" y="120" width="9" height="10" fill="#4e4e52"/><rect x="53" y="121" width="2" height="2" fill="#f6f6ff"/><rect x="53" y="124" width="2" height="2" fill="#f6f6ff"/><rect x="53" y="127" width="2" height="2" fill="#f6f6ff"/><rect x="56" y="121" width="2" height="2" fill="#f6f6ff"/><rect x="56" y="124" width="2" height="2" fill="#f6f6ff"/><rect x="56" y="127" width="2" height="2" fill="#f6f6ff"/><rect x="50" y="121" width="2" height="2" fill="#f6f6ff"/></g><path d="M47.2 119.4L55.2 131.4H47.2Z" fill="#4d94f2"/><path d="M47.4 118.6L55.6 130.6" stroke="#101018" stroke-width="1.4" fill="none"/><path d="M49 126.6L50.8 129H49Z" fill="#4a3c30"/>
<path d="M51.6 148.8V159.4H41.6Z" fill="url(#gTri)" stroke="#2a2a2a" stroke-width="1.1" stroke-linejoin="round"/>
<path d="M64.5 149L66.8 146.6H72.6Q73.6 146.6 73.6 147.6V152.2H78.6Q79.5 152.2 79.5 153.2V158.6L76.8 161.5H65.5Q64.5 161.5 64.5 160.5Z" fill="#f4f4f6" stroke="#383838" stroke-width="1.1" stroke-linejoin="round"/><rect x="65.4" y="149.4" width="4.6" height="5.6" fill="#e2e3e8"/><rect x="65.4" y="156.4" width="4.6" height="4.2" fill="#e2e3e8"/><rect x="71.4" y="156" width="5" height="4.8" fill="#dfe0e6"/><path d="M70.5 161.2V155.2L73.5 152.3" fill="none" stroke="#383838" stroke-width="1"/>
<rect x="84.6" y="176.6" width="11.6" height="13.8" fill="url(#gF)" stroke="#3a3f50" stroke-width="1.1"/><rect x="85.2" y="177.2" width="10.4" height="2" fill="#9aa0b2"/><path d="M85 180.4H96 M85 183.6H96 M85 186.8H96 M88.4 180V190" stroke="#8a8e9a" stroke-width="0.8"/><path d="M81 179.5h2 M81 182.5h2 M81 185.5h2 M81 188.5h2" stroke="#3a3f50" stroke-width="1"/>
<path d="M60.400000000000006 206.6Q60.400000000000006 205.8 61.300000000000004 205.8H62.5L68.9 211.6Q69.4 212.1 68.9 212.6L62.5 218.4H61.300000000000004Q60.400000000000006 218.4 60.400000000000006 217.6Z" fill="#e0e0e0" stroke="#262626" stroke-width="1.1" stroke-linejoin="round"/>
<path d="M87.3 214.5h4.4v4.2q0 0.8 -0.8 0.8h-2.8q-0.8 0 -0.8 -0.8z" fill="#dcdce6" stroke="#62667c" stroke-width="0.8"/><path d="M87.3 219.3h4.4" stroke="#3a3e50" stroke-width="1"/><circle cx="89.5" cy="210.3" r="4.6" fill="url(#gBulb)" stroke="#d4a21c" stroke-width="0.9"/>
<path d="M108.8 207.6Q108.8 206.6 109.8 206.6H114.4L115.4 208H121.6Q122.6 208 122.6 209V217.4Q122.6 218.4 121.6 218.4H109.8Q108.8 218.4 108.8 217.4Z" fill="url(#gF)" stroke="#3a3f4a" stroke-width="1.1"/><path d="M109 209.6H115" stroke="#3a3f4a" stroke-width="0.9"/>
<path d="M60.400000000000006 235.6Q60.400000000000006 234.8 61.300000000000004 234.8H62.5L68.9 240.6Q69.4 241.1 68.9 241.6L62.5 247.4H61.300000000000004Q60.400000000000006 247.4 60.400000000000006 246.6Z" fill="#e0e0e0" stroke="#262626" stroke-width="1.1" stroke-linejoin="round"/>
<rect x="82.5" y="233.5" width="15" height="15" fill="#f2f2f2" stroke="#a0a0a0" stroke-width="0.9"/><rect x="84.4" y="235.4" width="11.2" height="11.2" fill="url(#gChk)" stroke="#c2c4cc" stroke-width="0.8"/><path d="M86.2 241.2L88.8 244.6L93.8 236.8" fill="none" stroke="#3a4690" stroke-width="1.9"/>
<path d="M113.39999999999999 243.5h4.4v4.2q0 0.8 -0.8 0.8h-2.8q-0.8 0 -0.8 -0.8z" fill="#dcdce6" stroke="#62667c" stroke-width="0.8"/><path d="M113.39999999999999 248.3h4.4" stroke="#3a3e50" stroke-width="1"/><circle cx="115.6" cy="239.3" r="4.6" fill="url(#gBulb)" stroke="#d4a21c" stroke-width="0.9"/>
<path d="M134.6 237.4L138 233.6H148.4Q149.4 233.6 149.4 234.6V244.6L146 248.4H135.6Q134.6 248.4 134.6 247.4Z" fill="#f4f4f6" stroke="#3a3a3a" stroke-width="1.1" stroke-linejoin="round"/><rect x="135.6" y="238" width="9.8" height="9.6" fill="#dcdee4"/><path d="M146 238L148.8 235V244.4L146 247.6Z" fill="#c4c8d0"/>
<path d="M60.400000000000006 264.59999999999997Q60.400000000000006 263.79999999999995 61.300000000000004 263.79999999999995H62.5L68.9 269.59999999999997Q69.4 270.09999999999997 68.9 270.59999999999997L62.5 276.4H61.300000000000004Q60.400000000000006 276.4 60.400000000000006 275.59999999999997Z" fill="#e0e0e0" stroke="#262626" stroke-width="1.1" stroke-linejoin="round"/>
<rect x="82.5" y="262.5" width="15" height="15" fill="#f2f2f2" stroke="#a0a0a0" stroke-width="0.9"/><rect x="84.4" y="264.4" width="11.2" height="11.2" fill="url(#gChk)" stroke="#c2c4cc" stroke-width="0.8"/><path d="M86.2 270.2L88.8 273.6L93.8 265.8" fill="none" stroke="#3a4690" stroke-width="1.9"/>
<path d="M113.39999999999999 272.5h4.4v4.2q0 0.8 -0.8 0.8h-2.8q-0.8 0 -0.8 -0.8z" fill="#dcdce6" stroke="#62667c" stroke-width="0.8"/><path d="M113.39999999999999 277.3h4.4" stroke="#3a3e50" stroke-width="1"/><circle cx="115.6" cy="268.3" r="4.6" fill="url(#gBulb)" stroke="#d4a21c" stroke-width="0.9"/>
<path d="M134.6 266.4L138 262.6H148.4Q149.4 262.6 149.4 263.6V273.6L146 277.4H135.6Q134.6 277.4 134.6 276.4Z" fill="#f4f4f6" stroke="#3a3a3a" stroke-width="1.1" stroke-linejoin="round"/><rect x="135.6" y="267" width="9.8" height="9.6" fill="#dcdee4"/><path d="M146 267L148.8 264V273.4L146 276.6Z" fill="#c4c8d0"/>
<path d="M60.400000000000006 293.59999999999997Q60.400000000000006 292.79999999999995 61.300000000000004 292.79999999999995H62.5L68.9 298.59999999999997Q69.4 299.09999999999997 68.9 299.59999999999997L62.5 305.4H61.300000000000004Q60.400000000000006 305.4 60.400000000000006 304.59999999999997Z" fill="#e0e0e0" stroke="#262626" stroke-width="1.1" stroke-linejoin="round"/>
<rect x="82.5" y="291.5" width="15" height="15" fill="#f2f2f2" stroke="#a0a0a0" stroke-width="0.9"/><rect x="84.4" y="293.4" width="11.2" height="11.2" fill="url(#gChk)" stroke="#c2c4cc" stroke-width="0.8"/><path d="M86.2 299.2L88.8 302.6L93.8 294.8" fill="none" stroke="#3a4690" stroke-width="1.9"/>
<path d="M113.39999999999999 301.5h4.4v4.2q0 0.8 -0.8 0.8h-2.8q-0.8 0 -0.8 -0.8z" fill="#dcdce6" stroke="#62667c" stroke-width="0.8"/><path d="M113.39999999999999 306.3h4.4" stroke="#3a3e50" stroke-width="1"/><circle cx="115.6" cy="297.3" r="4.6" fill="url(#gBulb)" stroke="#d4a21c" stroke-width="0.9"/>
<path d="M134.6 295.4L138 291.6H148.4Q149.4 291.6 149.4 292.6V302.6L146 306.4H135.6Q134.6 306.4 134.6 305.4Z" fill="#f4f4f6" stroke="#3a3a3a" stroke-width="1.1" stroke-linejoin="round"/><rect x="135.6" y="296" width="9.8" height="9.6" fill="#dcdee4"/><path d="M146 296L148.8 293V302.4L146 305.6Z" fill="#c4c8d0"/>
<path d="M60.400000000000006 322.59999999999997Q60.400000000000006 321.79999999999995 61.300000000000004 321.79999999999995H62.5L68.9 327.59999999999997Q69.4 328.09999999999997 68.9 328.59999999999997L62.5 334.4H61.300000000000004Q60.400000000000006 334.4 60.400000000000006 333.59999999999997Z" fill="#e0e0e0" stroke="#262626" stroke-width="1.1" stroke-linejoin="round"/>
<rect x="82.5" y="320.5" width="15" height="15" fill="#f2f2f2" stroke="#a0a0a0" stroke-width="0.9"/><rect x="84.4" y="322.4" width="11.2" height="11.2" fill="url(#gChk)" stroke="#c2c4cc" stroke-width="0.8"/><path d="M86.2 328.2L88.8 331.6L93.8 323.8" fill="none" stroke="#3a4690" stroke-width="1.9"/>
<path d="M113.39999999999999 330.5h4.4v4.2q0 0.8 -0.8 0.8h-2.8q-0.8 0 -0.8 -0.8z" fill="#dcdce6" stroke="#62667c" stroke-width="0.8"/><path d="M113.39999999999999 335.3h4.4" stroke="#3a3e50" stroke-width="1"/><circle cx="115.6" cy="326.3" r="4.6" fill="url(#gBulb)" stroke="#d4a21c" stroke-width="0.9"/>
<path d="M134.5 323L136.8 320.6H142.6Q143.6 320.6 143.6 321.6V326.2H148.6Q149.5 326.2 149.5 327.2V332.6L146.8 335.5H135.5Q134.5 335.5 134.5 334.5Z" fill="#f4f4f6" stroke="#383838" stroke-width="1.1" stroke-linejoin="round"/><rect x="135.4" y="323.4" width="4.6" height="5.6" fill="#e2e3e8"/><rect x="135.4" y="330.4" width="4.6" height="4.2" fill="#e2e3e8"/><rect x="141.4" y="330" width="5" height="4.8" fill="#dfe0e6"/><path d="M140.5 335.2V329.2L143.5 326.3" fill="none" stroke="#383838" stroke-width="1"/>
<path d="M60.400000000000006 351.59999999999997Q60.400000000000006 350.79999999999995 61.300000000000004 350.79999999999995H62.5L68.9 356.59999999999997Q69.4 357.09999999999997 68.9 357.59999999999997L62.5 363.4H61.300000000000004Q60.400000000000006 363.4 60.400000000000006 362.59999999999997Z" fill="#e0e0e0" stroke="#262626" stroke-width="1.1" stroke-linejoin="round"/>
<rect x="82.5" y="349.5" width="15" height="15" fill="#f2f2f2" stroke="#a0a0a0" stroke-width="0.9"/><rect x="84.4" y="351.4" width="11.2" height="11.2" fill="url(#gChk)" stroke="#c2c4cc" stroke-width="0.8"/><path d="M86.2 357.2L88.8 360.6L93.8 352.8" fill="none" stroke="#3a4690" stroke-width="1.9"/>
<path d="M113.39999999999999 359.5h4.4v4.2q0 0.8 -0.8 0.8h-2.8q-0.8 0 -0.8 -0.8z" fill="#dcdce6" stroke="#62667c" stroke-width="0.8"/><path d="M113.39999999999999 364.3h4.4" stroke="#3a3e50" stroke-width="1"/><circle cx="115.6" cy="355.3" r="4.6" fill="url(#gBulb)" stroke="#d4a21c" stroke-width="0.9"/>
<path d="M134.5 352L136.8 349.6H142.6Q143.6 349.6 143.6 350.6V355.2H148.6Q149.5 355.2 149.5 356.2V361.6L146.8 364.5H135.5Q134.5 364.5 134.5 363.5Z" fill="#f4f4f6" stroke="#383838" stroke-width="1.1" stroke-linejoin="round"/><rect x="135.4" y="352.4" width="4.6" height="5.6" fill="#e2e3e8"/><rect x="135.4" y="359.4" width="4.6" height="4.2" fill="#e2e3e8"/><rect x="141.4" y="359" width="5" height="4.8" fill="#dfe0e6"/><path d="M140.5 364.2V358.2L143.5 355.3" fill="none" stroke="#383838" stroke-width="1"/>
<path d="M60.400000000000006 380.59999999999997Q60.400000000000006 379.79999999999995 61.300000000000004 379.79999999999995H62.5L68.9 385.59999999999997Q69.4 386.09999999999997 68.9 386.59999999999997L62.5 392.4H61.300000000000004Q60.400000000000006 392.4 60.400000000000006 391.59999999999997Z" fill="#e0e0e0" stroke="#262626" stroke-width="1.1" stroke-linejoin="round"/>
<rect x="82.5" y="378.5" width="15" height="15" fill="#f2f2f2" stroke="#a0a0a0" stroke-width="0.9"/><rect x="84.4" y="380.4" width="11.2" height="11.2" fill="url(#gChk)" stroke="#c2c4cc" stroke-width="0.8"/><path d="M86.2 386.2L88.8 389.6L93.8 381.8" fill="none" stroke="#3a4690" stroke-width="1.9"/>
<path d="M113.39999999999999 388.5h4.4v4.2q0 0.8 -0.8 0.8h-2.8q-0.8 0 -0.8 -0.8z" fill="#dcdce6" stroke="#62667c" stroke-width="0.8"/><path d="M113.39999999999999 393.3h4.4" stroke="#3a3e50" stroke-width="1"/><circle cx="115.6" cy="384.3" r="4.6" fill="url(#gBulb)" stroke="#d4a21c" stroke-width="0.9"/>
<path d="M134.6 382.4L138 378.6H148.4Q149.4 378.6 149.4 379.6V389.6L146 393.4H135.6Q134.6 393.4 134.6 392.4Z" fill="#f4f4f6" stroke="#3a3a3a" stroke-width="1.1" stroke-linejoin="round"/><rect x="135.6" y="383" width="9.8" height="9.6" fill="#dcdee4"/><path d="M146 383L148.8 380V389.4L146 392.6Z" fill="#c4c8d0"/>
<path d="M60.400000000000006 409.59999999999997Q60.400000000000006 408.79999999999995 61.300000000000004 408.79999999999995H62.5L68.9 414.59999999999997Q69.4 415.09999999999997 68.9 415.59999999999997L62.5 421.4H61.300000000000004Q60.400000000000006 421.4 60.400000000000006 420.59999999999997Z" fill="#e0e0e0" stroke="#262626" stroke-width="1.1" stroke-linejoin="round"/>
<rect x="82.5" y="407.5" width="15" height="15" fill="#f2f2f2" stroke="#a0a0a0" stroke-width="0.9"/><rect x="84.4" y="409.4" width="11.2" height="11.2" fill="url(#gChk)" stroke="#c2c4cc" stroke-width="0.8"/><path d="M86.2 415.2L88.8 418.6L93.8 410.8" fill="none" stroke="#3a4690" stroke-width="1.9"/>
<path d="M113.39999999999999 417.5h4.4v4.2q0 0.8 -0.8 0.8h-2.8q-0.8 0 -0.8 -0.8z" fill="#dcdce6" stroke="#62667c" stroke-width="0.8"/><path d="M113.39999999999999 422.3h4.4" stroke="#3a3e50" stroke-width="1"/><circle cx="115.6" cy="413.3" r="4.6" fill="url(#gBulb)" stroke="#d4a21c" stroke-width="0.9"/>
<path d="M134.5 410L136.8 407.6H142.6Q143.6 407.6 143.6 408.6V413.2H148.6Q149.5 413.2 149.5 414.2V419.6L146.8 422.5H135.5Q134.5 422.5 134.5 421.5Z" fill="#f4f4f6" stroke="#383838" stroke-width="1.1" stroke-linejoin="round"/><rect x="135.4" y="410.4" width="4.6" height="5.6" fill="#e2e3e8"/><rect x="135.4" y="417.4" width="4.6" height="4.2" fill="#e2e3e8"/><rect x="141.4" y="417" width="5" height="4.8" fill="#dfe0e6"/><path d="M140.5 422.2V416.2L143.5 413.3" fill="none" stroke="#383838" stroke-width="1"/>
<path d="M60.400000000000006 438.59999999999997Q60.400000000000006 437.79999999999995 61.300000000000004 437.79999999999995H62.5L68.9 443.59999999999997Q69.4 444.09999999999997 68.9 444.59999999999997L62.5 450.4H61.300000000000004Q60.400000000000006 450.4 60.400000000000006 449.59999999999997Z" fill="#e0e0e0" stroke="#262626" stroke-width="1.1" stroke-linejoin="round"/>
<rect x="82.5" y="436.5" width="15" height="15" fill="#f2f2f2" stroke="#a0a0a0" stroke-width="0.9"/><rect x="84.4" y="438.4" width="11.2" height="11.2" fill="url(#gChk)" stroke="#c2c4cc" stroke-width="0.8"/><path d="M86.2 444.2L88.8 447.6L93.8 439.8" fill="none" stroke="#3a4690" stroke-width="1.9"/>
<path d="M113.39999999999999 446.5h4.4v4.2q0 0.8 -0.8 0.8h-2.8q-0.8 0 -0.8 -0.8z" fill="#dcdce6" stroke="#62667c" stroke-width="0.8"/><path d="M113.39999999999999 451.3h4.4" stroke="#3a3e50" stroke-width="1"/><circle cx="115.6" cy="442.3" r="4.6" fill="url(#gBulb)" stroke="#d4a21c" stroke-width="0.9"/>
<path d="M134.6 440.4L138 436.6H148.4Q149.4 436.6 149.4 437.6V447.6L146 451.4H135.6Q134.6 451.4 134.6 450.4Z" fill="#f4f4f6" stroke="#3a3a3a" stroke-width="1.1" stroke-linejoin="round"/><rect x="135.6" y="441" width="9.8" height="9.6" fill="#dcdee4"/><path d="M146 441L148.8 438V447.4L146 450.6Z" fill="#c4c8d0"/>
<path d="M60.400000000000006 467.59999999999997Q60.400000000000006 466.79999999999995 61.300000000000004 466.79999999999995H62.5L68.9 472.59999999999997Q69.4 473.09999999999997 68.9 473.59999999999997L62.5 479.4H61.300000000000004Q60.400000000000006 479.4 60.400000000000006 478.59999999999997Z" fill="#e0e0e0" stroke="#262626" stroke-width="1.1" stroke-linejoin="round"/>
<rect x="82.5" y="465.5" width="15" height="15" fill="#f2f2f2" stroke="#a0a0a0" stroke-width="0.9"/><rect x="84.4" y="467.4" width="11.2" height="11.2" fill="url(#gChk)" stroke="#c2c4cc" stroke-width="0.8"/><path d="M86.2 473.2L88.8 476.6L93.8 468.8" fill="none" stroke="#3a4690" stroke-width="1.9"/>
<path d="M113.39999999999999 475.5h4.4v4.2q0 0.8 -0.8 0.8h-2.8q-0.8 0 -0.8 -0.8z" fill="#dcdce6" stroke="#62667c" stroke-width="0.8"/><path d="M113.39999999999999 480.3h4.4" stroke="#3a3e50" stroke-width="1"/><circle cx="115.6" cy="471.3" r="4.6" fill="url(#gBulb)" stroke="#d4a21c" stroke-width="0.9"/>
<path d="M134.6 469.4L138 465.6H148.4Q149.4 465.6 149.4 466.6V476.6L146 480.4H135.6Q134.6 480.4 134.6 479.4Z" fill="#f4f4f6" stroke="#3a3a3a" stroke-width="1.1" stroke-linejoin="round"/><rect x="135.6" y="470" width="9.8" height="9.6" fill="#dcdee4"/><path d="M146 470L148.8 467V476.4L146 479.6Z" fill="#c4c8d0"/>
<path d="M60.400000000000006 496.59999999999997Q60.400000000000006 495.79999999999995 61.300000000000004 495.79999999999995H62.5L68.9 501.59999999999997Q69.4 502.09999999999997 68.9 502.59999999999997L62.5 508.4H61.300000000000004Q60.400000000000006 508.4 60.400000000000006 507.59999999999997Z" fill="#e0e0e0" stroke="#262626" stroke-width="1.1" stroke-linejoin="round"/>
<rect x="82.5" y="494.5" width="15" height="15" fill="#f2f2f2" stroke="#a0a0a0" stroke-width="0.9"/><rect x="84.4" y="496.4" width="11.2" height="11.2" fill="url(#gChk)" stroke="#c2c4cc" stroke-width="0.8"/><path d="M86.2 502.2L88.8 505.6L93.8 497.8" fill="none" stroke="#3a4690" stroke-width="1.9"/>
<path d="M113.39999999999999 504.5h4.4v4.2q0 0.8 -0.8 0.8h-2.8q-0.8 0 -0.8 -0.8z" fill="#dcdce6" stroke="#62667c" stroke-width="0.8"/><path d="M113.39999999999999 509.3h4.4" stroke="#3a3e50" stroke-width="1"/><circle cx="115.6" cy="500.3" r="4.6" fill="url(#gBulb)" stroke="#d4a21c" stroke-width="0.9"/>
<path d="M134.6 498.4L138 494.6H148.4Q149.4 494.6 149.4 495.6V505.6L146 509.4H135.6Q134.6 509.4 134.6 508.4Z" fill="#f4f4f6" stroke="#3a3a3a" stroke-width="1.1" stroke-linejoin="round"/><rect x="135.6" y="499" width="9.8" height="9.6" fill="#dcdee4"/><path d="M146 499L148.8 496V505.4L146 508.6Z" fill="#c4c8d0"/>
<path d="M60.400000000000006 525.6Q60.400000000000006 524.8 61.300000000000004 524.8H62.5L68.9 530.6Q69.4 531.1 68.9 531.6L62.5 537.4H61.300000000000004Q60.400000000000006 537.4 60.400000000000006 536.6Z" fill="#e0e0e0" stroke="#262626" stroke-width="1.1" stroke-linejoin="round"/>
<rect x="82.5" y="523.5" width="15" height="15" fill="#f2f2f2" stroke="#a0a0a0" stroke-width="0.9"/><rect x="84.4" y="525.4" width="11.2" height="11.2" fill="url(#gChk)" stroke="#c2c4cc" stroke-width="0.8"/><path d="M86.2 531.2L88.8 534.6L93.8 526.8" fill="none" stroke="#3a4690" stroke-width="1.9"/>
<path d="M113.39999999999999 533.5h4.4v4.2q0 0.8 -0.8 0.8h-2.8q-0.8 0 -0.8 -0.8z" fill="#dcdce6" stroke="#62667c" stroke-width="0.8"/><path d="M113.39999999999999 538.3h4.4" stroke="#3a3e50" stroke-width="1"/><circle cx="115.6" cy="529.3" r="4.6" fill="url(#gBulb)" stroke="#d4a21c" stroke-width="0.9"/>
<path d="M134.5 526L136.8 523.6H142.6Q143.6 523.6 143.6 524.6V529.2H148.6Q149.5 529.2 149.5 530.2V535.6L146.8 538.5H135.5Q134.5 538.5 134.5 537.5Z" fill="#f4f4f6" stroke="#383838" stroke-width="1.1" stroke-linejoin="round"/><rect x="135.4" y="526.4" width="4.6" height="5.6" fill="#e2e3e8"/><rect x="135.4" y="533.4" width="4.6" height="4.2" fill="#e2e3e8"/><rect x="141.4" y="533" width="5" height="4.8" fill="#dfe0e6"/><path d="M140.5 538.2V532.2L143.5 529.3" fill="none" stroke="#383838" stroke-width="1"/>
<path d="M60.400000000000006 554.6Q60.400000000000006 553.8 61.300000000000004 553.8H62.5L68.9 559.6Q69.4 560.1 68.9 560.6L62.5 566.4H61.300000000000004Q60.400000000000006 566.4 60.400000000000006 565.6Z" fill="#e0e0e0" stroke="#262626" stroke-width="1.1" stroke-linejoin="round"/>
<rect x="82.5" y="552.5" width="15" height="15" fill="#f2f2f2" stroke="#a0a0a0" stroke-width="0.9"/><rect x="84.4" y="554.4" width="11.2" height="11.2" fill="url(#gChk)" stroke="#c2c4cc" stroke-width="0.8"/><path d="M86.2 560.2L88.8 563.6L93.8 555.8" fill="none" stroke="#3a4690" stroke-width="1.9"/>
<path d="M113.39999999999999 562.5h4.4v4.2q0 0.8 -0.8 0.8h-2.8q-0.8 0 -0.8 -0.8z" fill="#dcdce6" stroke="#62667c" stroke-width="0.8"/><path d="M113.39999999999999 567.3h4.4" stroke="#3a3e50" stroke-width="1"/><circle cx="115.6" cy="558.3" r="4.6" fill="url(#gBulb)" stroke="#d4a21c" stroke-width="0.9"/>
<path d="M134.6 556.4L138 552.6H148.4Q149.4 552.6 149.4 553.6V563.6L146 567.4H135.6Q134.6 567.4 134.6 566.4Z" fill="#f4f4f6" stroke="#3a3a3a" stroke-width="1.1" stroke-linejoin="round"/><rect x="135.6" y="557" width="9.8" height="9.6" fill="#dcdee4"/><path d="M146 557L148.8 554V563.4L146 566.6Z" fill="#c4c8d0"/>
<path d="M60.400000000000006 583.6Q60.400000000000006 582.8 61.300000000000004 582.8H62.5L68.9 588.6Q69.4 589.1 68.9 589.6L62.5 595.4H61.300000000000004Q60.400000000000006 595.4 60.400000000000006 594.6Z" fill="#e0e0e0" stroke="#262626" stroke-width="1.1" stroke-linejoin="round"/>
<rect x="82.5" y="581.5" width="15" height="15" fill="#f2f2f2" stroke="#a0a0a0" stroke-width="0.9"/><rect x="84.4" y="583.4" width="11.2" height="11.2" fill="url(#gChk)" stroke="#c2c4cc" stroke-width="0.8"/><path d="M86.2 589.2L88.8 592.6L93.8 584.8" fill="none" stroke="#3a4690" stroke-width="1.9"/>
<path d="M113.39999999999999 591.5h4.4v4.2q0 0.8 -0.8 0.8h-2.8q-0.8 0 -0.8 -0.8z" fill="#dcdce6" stroke="#62667c" stroke-width="0.8"/><path d="M113.39999999999999 596.3h4.4" stroke="#3a3e50" stroke-width="1"/><circle cx="115.6" cy="587.3" r="4.6" fill="url(#gBulb)" stroke="#d4a21c" stroke-width="0.9"/>
<path d="M134.5 584L136.8 581.6H142.6Q143.6 581.6 143.6 582.6V587.2H148.6Q149.5 587.2 149.5 588.2V593.6L146.8 596.5H135.5Q134.5 596.5 134.5 595.5Z" fill="#f4f4f6" stroke="#383838" stroke-width="1.1" stroke-linejoin="round"/><rect x="135.4" y="584.4" width="4.6" height="5.6" fill="#e2e3e8"/><rect x="135.4" y="591.4" width="4.6" height="4.2" fill="#e2e3e8"/><rect x="141.4" y="591" width="5" height="4.8" fill="#dfe0e6"/><path d="M140.5 596.2V590.2L143.5 587.3" fill="none" stroke="#383838" stroke-width="1"/>
<path d="M60.400000000000006 612.6Q60.400000000000006 611.8 61.300000000000004 611.8H62.5L68.9 617.6Q69.4 618.1 68.9 618.6L62.5 624.4H61.300000000000004Q60.400000000000006 624.4 60.400000000000006 623.6Z" fill="#e0e0e0" stroke="#262626" stroke-width="1.1" stroke-linejoin="round"/>
<rect x="82.5" y="610.5" width="15" height="15" fill="#f2f2f2" stroke="#a0a0a0" stroke-width="0.9"/><rect x="84.4" y="612.4" width="11.2" height="11.2" fill="url(#gChk)" stroke="#c2c4cc" stroke-width="0.8"/><path d="M86.2 618.2L88.8 621.6L93.8 613.8" fill="none" stroke="#3a4690" stroke-width="1.9"/>
<path d="M113.39999999999999 620.5h4.4v4.2q0 0.8 -0.8 0.8h-2.8q-0.8 0 -0.8 -0.8z" fill="#dcdce6" stroke="#62667c" stroke-width="0.8"/><path d="M113.39999999999999 625.3h4.4" stroke="#3a3e50" stroke-width="1"/><circle cx="115.6" cy="616.3" r="4.6" fill="url(#gBulb)" stroke="#d4a21c" stroke-width="0.9"/>
<path d="M134.6 614.4L138 610.6H148.4Q149.4 610.6 149.4 611.6V621.6L146 625.4H135.6Q134.6 625.4 134.6 624.4Z" fill="#f4f4f6" stroke="#3a3a3a" stroke-width="1.1" stroke-linejoin="round"/><rect x="135.6" y="615" width="9.8" height="9.6" fill="#dcdee4"/><path d="M146 615L148.8 612V621.4L146 624.6Z" fill="#c4c8d0"/>
<path d="M60.400000000000006 641.6Q60.400000000000006 640.8 61.300000000000004 640.8H62.5L68.9 646.6Q69.4 647.1 68.9 647.6L62.5 653.4H61.300000000000004Q60.400000000000006 653.4 60.400000000000006 652.6Z" fill="#e0e0e0" stroke="#262626" stroke-width="1.1" stroke-linejoin="round"/>
<rect x="82.5" y="639.5" width="15" height="15" fill="#f2f2f2" stroke="#a0a0a0" stroke-width="0.9"/><rect x="84.4" y="641.4" width="11.2" height="11.2" fill="url(#gChk)" stroke="#c2c4cc" stroke-width="0.8"/><path d="M86.2 647.2L88.8 650.6L93.8 642.8" fill="none" stroke="#3a4690" stroke-width="1.9"/>
<path d="M113.39999999999999 649.5h4.4v4.2q0 0.8 -0.8 0.8h-2.8q-0.8 0 -0.8 -0.8z" fill="#dcdce6" stroke="#62667c" stroke-width="0.8"/><path d="M113.39999999999999 654.3h4.4" stroke="#3a3e50" stroke-width="1"/><circle cx="115.6" cy="645.3" r="4.6" fill="url(#gBulb)" stroke="#d4a21c" stroke-width="0.9"/>
<path d="M134.6 643.4L138 639.6H148.4Q149.4 639.6 149.4 640.6V650.6L146 654.4H135.6Q134.6 654.4 134.6 653.4Z" fill="#f4f4f6" stroke="#3a3a3a" stroke-width="1.1" stroke-linejoin="round"/><rect x="135.6" y="644" width="9.8" height="9.6" fill="#dcdee4"/><path d="M146 644L148.8 641V650.4L146 653.6Z" fill="#c4c8d0"/>
<path d="M60.400000000000006 670.6Q60.400000000000006 669.8 61.300000000000004 669.8H62.5L68.9 675.6Q69.4 676.1 68.9 676.6L62.5 682.4H61.300000000000004Q60.400000000000006 682.4 60.400000000000006 681.6Z" fill="#e0e0e0" stroke="#262626" stroke-width="1.1" stroke-linejoin="round"/>
<rect x="82.5" y="668.5" width="15" height="15" fill="#f2f2f2" stroke="#a0a0a0" stroke-width="0.9"/><rect x="84.4" y="670.4" width="11.2" height="11.2" fill="url(#gChk)" stroke="#c2c4cc" stroke-width="0.8"/><path d="M86.2 676.2L88.8 679.6L93.8 671.8" fill="none" stroke="#3a4690" stroke-width="1.9"/>
<path d="M113.39999999999999 678.5h4.4v4.2q0 0.8 -0.8 0.8h-2.8q-0.8 0 -0.8 -0.8z" fill="#dcdce6" stroke="#62667c" stroke-width="0.8"/><path d="M113.39999999999999 683.3h4.4" stroke="#3a3e50" stroke-width="1"/><circle cx="115.6" cy="674.3" r="4.6" fill="url(#gBulb)" stroke="#d4a21c" stroke-width="0.9"/>
<path d="M134.6 672.4L138 668.6H148.4Q149.4 668.6 149.4 669.6V679.6L146 683.4H135.6Q134.6 683.4 134.6 682.4Z" fill="#f4f4f6" stroke="#3a3a3a" stroke-width="1.1" stroke-linejoin="round"/><rect x="135.6" y="673" width="9.8" height="9.6" fill="#dcdee4"/><path d="M146 673L148.8 670V679.4L146 682.6Z" fill="#c4c8d0"/>
</svg>
</div>
<div class="nb" style="left:879px;width:78px"></div>
<div class="nb" style="left:965px;width:76px"></div>
<svg id="nav" width="180" height="34" viewBox="876 876 180 34" style="position:absolute;left:876px;top:876px">
<defs>
<linearGradient id="nL" x1="0" y1="0" x2="0" y2="1"><stop offset="0" stop-color="#bcdfe4"/><stop offset="1" stop-color="#ffffff"/></linearGradient>
<linearGradient id="nH" x1="0" y1="0" x2="1" y2="1"><stop offset="0" stop-color="#ffffff"/><stop offset="1" stop-color="#dfe3ea"/></linearGradient>
</defs>
<!-- hand -->
<path d="M888.6 891.4L887.8 886.2Q887.6 884.4 888.8 884.2Q890 884 890.4 885.8L891.2 889.4L891.2 884.4Q891.2 882.9 892.5 882.9Q893.8 882.9 893.8 884.4L893.9 889.2L895 885Q895.4 883.6 896.6 883.9Q897.8 884.2 897.5 885.7L896.7 890.2L898.2 887.6Q898.9 886.5 899.8 887Q900.7 887.5 900.2 888.8Q898.6 892.4 897.8 895.2L896.4 898.8H890.4L887.2 895Q885.6 893.2 884.6 892.4Q883.6 891.5 884.5 890.7Q885.4 890 886.6 890.6Q887.6 891.2 888.6 892.4Z" fill="url(#nH)" stroke="#1e2430" stroke-width="0.95" stroke-linejoin="round"/>
<!-- zoom window -->
<rect x="910.5" y="883.5" width="15" height="15" fill="none" stroke="#505050" stroke-width="1" stroke-dasharray="2 2.2"/>
<path d="M921 893.8L925.2 898" stroke="#3a3a3a" stroke-width="2.6" stroke-linecap="round"/>
<circle cx="916.6" cy="889.4" r="6" fill="url(#nL)" stroke="#1e1e1e" stroke-width="1.2"/>
<!-- zoom fit -->
<path d="M947 893.8L951.2 898" stroke="#3a3a3a" stroke-width="2.6" stroke-linecap="round"/>
<circle cx="942.5" cy="889.4" r="6" fill="url(#nL)" stroke="#1e1e1e" stroke-width="1.2"/>
<rect x="939.6" y="887" width="5.8" height="5.4" rx="0.8" fill="#eef0f6" stroke="#2e3444" stroke-width="1"/>
<!-- settings -->
<path d="M970.5 883V890.6 M985.6 883V890.6 M971 886.3H985 M974.4 884.3H981.6" stroke="#3a3a3a" stroke-width="1" fill="none"/>
<path d="M971.4 886.3l1.6-1.2v2.4z M984.8 886.3l-1.6-1.2v2.4z" fill="#3a3a3a"/>
<circle cx="979.5" cy="893.5" r="3.6" fill="#eceef2" stroke="#4a4a4a" stroke-width="1.1"/>
<g stroke="#4a4a4a" stroke-width="1.6" stroke-linecap="round"><path d="M979.5 888.6v1 M979.5 897.4v1 M974.6 893.5h1 M983.4 893.5h1 M976 890l.7.7 M982.3 896.3l.7.7 M976 897l.7-.7 M982.3 890.7l.7-.7"/></g>
<circle cx="979.5" cy="893.5" r="3.3" fill="#eceef2"/>
<rect x="978.6" y="892.6" width="1.8" height="1.8" fill="#eceef2" stroke="#4a4a4a" stroke-width="0.7" transform="rotate(45 979.5 893.5)"/>
<path d="M990 888.2H997L993.5 893Z" fill="#333"/>
<!-- sheet icon -->
<rect x="1009.5" y="884.5" width="13" height="13" fill="#fdfdfd" stroke="#686868" stroke-width="1"/><rect x="1020" y="891" width="2" height="6" fill="#c4cee6"/><g shape-rendering="crispEdges"><rect x="1012" y="886" width="9" height="10" fill="#4e4e52"/><rect x="1015" y="887" width="2" height="2" fill="#f6f6ff"/><rect x="1015" y="890" width="2" height="2" fill="#f6f6ff"/><rect x="1015" y="893" width="2" height="2" fill="#f6f6ff"/><rect x="1018" y="887" width="2" height="2" fill="#f6f6ff"/><rect x="1018" y="890" width="2" height="2" fill="#f6f6ff"/><rect x="1018" y="893" width="2" height="2" fill="#f6f6ff"/><rect x="1012" y="887" width="2" height="2" fill="#f6f6ff"/></g><path d="M1009.2 885.4L1017.2 897.4H1009.2Z" fill="#4d94f2"/><path d="M1009.4 884.6L1017.6 896.6" stroke="#101018" stroke-width="1.4" fill="none"/><path d="M1011 892.6L1012.8 895H1011Z" fill="#4a3c30"/>
<path d="M1028 888.2H1035L1031.5 893Z" fill="#333"/>
</svg>
<svg id="cursor" width="16" height="24" viewBox="924 524 16 24" style="position:absolute;left:924px;top:524px">
<path d="M926.5 526.4V542.4Q926.6 543 927.2 542.6L930.5 539.3L932.9 544.3Q933.8 545.5 935 544.7Q936.1 544 935.6 542.7L933.5 538.3H937.7Z" fill="#fcfcfc" stroke="#14182a" stroke-width="1.05" stroke-linejoin="round"/>
</svg>

</body></html>
